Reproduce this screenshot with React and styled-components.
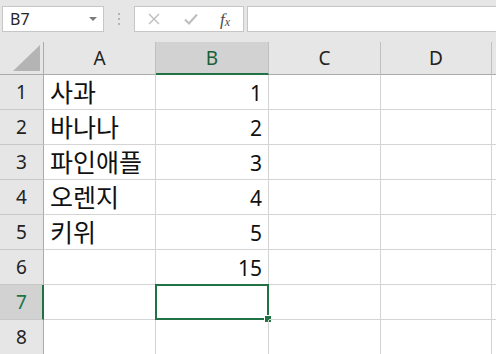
import styled, { createGlobalStyle } from "styled-components";

const GlobalStyle = createGlobalStyle`
    html, body {
        margin: 0;
        padding: 0;
        background: #ffffff;
        overflow: hidden;
    }
    body {
        font-family: "Noto Sans", "Noto Sans CJK KR", sans-serif;
    }
`;

const columns = ["A", "B", "C", "D", "E"];
const widths = "44px 112px 113px 112px 111px 1fr";

const data = [
    { a: "사과", b: "1" },
    { a: "바나나", b: "2" },
    { a: "파인애플", b: "3" },
    { a: "오렌지", b: "4" },
    { a: "키위", b: "5" },
    { a: "", b: "15" },
    { a: "", b: "" },
    { a: "", b: "" },
];

const GREEN = "#217346";

export default function App(){
    return(
        <>
            <GlobalStyle />
            <Page>
                <TopBar>
                    <NameBox>
                        <span>B7</span>
                        <Caret />
                    </NameBox>
                    <Dots>
                        <i /><i /><i />
                    </Dots>
                    <IconBox>
                        <IconSlot>
                            <svg width="12" height="12" viewBox="0 0 12 12">
                                <path d="M1 1 L11 11 M11 1 L1 11" stroke="#bdbdbd" strokeWidth="1.4" fill="none" />
                            </svg>
                        </IconSlot>
                        <IconSlot>
                            <svg width="14" height="12" viewBox="0 0 14 12">
                                <path d="M1 6.5 L5 10.5 L13 1.5" stroke="#bdbdbd" strokeWidth="2" fill="none" />
                            </svg>
                        </IconSlot>
                        <Fx>f<sub>x</sub></Fx>
                    </IconBox>
                    <FormulaInput />
                </TopBar>

                <Sheet>
                    <Corner>
                        <svg width="27" height="26" viewBox="0 0 27 26">
                            <polygon points="27,0 27,26 0,26" fill="#b4b4b4" />
                        </svg>
                    </Corner>
                    {columns.map((c) => (
                        <ColHeader key={c} $active={c === "B"}>{c !== "E" ? c : ""}</ColHeader>
                    ))}

                    {data.map((row, i) => (
                        <Row key={i} index={i + 1} row={row} />
                    ))}
                </Sheet>
            </Page>
        </>
    );
}

function Row({ index, row }){
    const active = index === 7;
    return(
        <>
            <RowHeader $active={active}>{index}</RowHeader>
            <Cell><Korean>{row.a}</Korean></Cell>
            <Cell $right>
                <Num>{row.b}</Num>
                {active && (
                    <Selection>
                        <Handle />
                    </Selection>
                )}
            </Cell>
            <Cell />
            <Cell />
            <Cell />
        </>
    );
}

const Page = styled.div`
    width: 496px;
    height: 354px;
    overflow: hidden;
    background: #ffffff;
`;

const TopBar = styled.div`
    height: 42px;
    box-sizing: border-box;
    background: #e6e6e6;
    display: flex;
    align-items: flex-start;
    padding: 6px 0 0 2px;
`;

const NameBox = styled.div`
    width: 102px;
    height: 26px;
    box-sizing: border-box;
    background: #ffffff;
    border: 1px solid #c6c6c6;
    display: flex;
    align-items: center;
    justify-content: space-between;
    padding: 0 6px 0 7px;
    font-size: 16px;
    color: #262626;
`;

const Caret = styled.div`
    width: 0;
    height: 0;
    border-left: 4px solid transparent;
    border-right: 4px solid transparent;
    border-top: 4px solid #7a7a7a;
`;

const Dots = styled.div`
    width: 30px;
    height: 26px;
    display: flex;
    flex-direction: column;
    align-items: center;
    justify-content: center;
    gap: 3px;

    i {
        width: 2px;
        height: 2px;
        background: #b4b4b4;
    }
`;

const IconBox = styled.div`
    width: 110px;
    height: 26px;
    box-sizing: border-box;
    background: #ffffff;
    border: 1px solid #c6c6c6;
    display: flex;
    align-items: center;
    padding-left: 13px;
`;

const IconSlot = styled.div`
    width: 36px;
    display: flex;
    align-items: center;
    justify-content: flex-start;
`;

const Fx = styled.span`
    font-family: "Liberation Serif", serif;
    font-style: italic;
    font-size: 17px;
    line-height: 1;
    color: #4a4a4a;

    sub {
        font-size: 12px;
        vertical-align: -1px;
    }
`;

const FormulaInput = styled.div`
    flex: 1;
    height: 26px;
    box-sizing: border-box;
    margin-left: 3px;
    background: #ffffff;
    border: 1px solid #c6c6c6;
    border-right: none;
`;

const Sheet = styled.div`
    display: grid;
    grid-template-columns: ${widths};
    grid-template-rows: 33px repeat(8, 35px);
`;

const Corner = styled.div`
    background: #e6e6e6;
    border-right: 1px solid #ababab;
    border-bottom: 1px solid #ababab;
    display: flex;
    align-items: flex-end;
    justify-content: flex-end;
    padding: 0 3px 3px 0;
`;

const ColHeader = styled.div`
    background: ${(p) => (p.$active ? "#d2d2d2" : "#e6e6e6")};
    border-right: 1px solid #c0c0c0;
    border-bottom: ${(p) => (p.$active ? `2px solid ${GREEN}` : "1px solid #ababab")};
    display: flex;
    align-items: center;
    justify-content: center;
    padding-top: ${(p) => (p.$active ? "1px" : "0")};
    font-size: 19px;
    color: ${(p) => (p.$active ? "#1b5e38" : "#222222")};
`;

const RowHeader = styled.div`
    background: ${(p) => (p.$active ? "#d2d2d2" : "#e6e6e6")};
    border-right: ${(p) => (p.$active ? `2px solid ${GREEN}` : "1px solid #ababab")};
    border-bottom: 1px solid #c8c8c8;
    display: flex;
    align-items: center;
    justify-content: center;
    padding-left: ${(p) => (p.$active ? "1px" : "0")};
    font-size: 19px;
    color: ${(p) => (p.$active ? GREEN : "#222222")};
`;

const Cell = styled.div`
    position: relative;
    border-right: 1px solid #d4d4d4;
    border-bottom: 1px solid #d4d4d4;
    display: flex;
    align-items: flex-end;
    justify-content: ${(p) => (p.$right ? "flex-end" : "flex-start")};
    padding: 0 6px 0 6px;
    overflow: visible;
`;

const Korean = styled.span`
    font-family: "Noto Sans CJK KR", "Noto Sans", sans-serif;
    font-size: 25px;
    line-height: 1;
    padding-bottom: 5px;
    color: #111111;
    white-space: nowrap;
`;

const Num = styled.span`
    font-size: 21px;
    line-height: 1;
    padding-bottom: 5px;
    color: #111111;
`;

const Selection = styled.div`
    position: absolute;
    left: -1px;
    top: -1px;
    right: -1px;
    bottom: -1px;
    border: 2px solid ${GREEN};
    pointer-events: none;
`;

const Handle = styled.div`
    position: absolute;
    right: -5px;
    bottom: -5px;
    width: 6px;
    height: 6px;
    background: ${GREEN};
    border: 1px solid #ffffff;
`;
